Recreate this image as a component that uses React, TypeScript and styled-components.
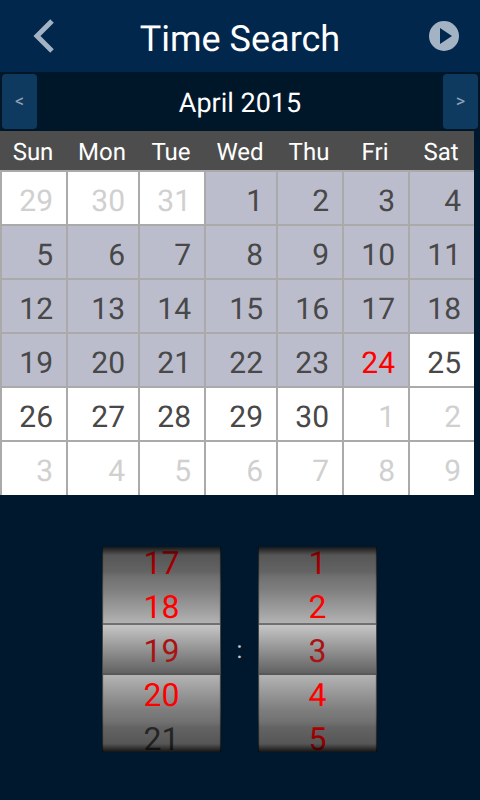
import React from "react";
import styled, { createGlobalStyle } from "styled-components";

const GlobalStyle = createGlobalStyle`
	html, body {
		margin: 0;
		padding: 0;
		background-color: #00182e;
	}
	* {
		box-sizing: border-box;
	}
`;

type DayKind = "muted" | "plain" | "marked" | "today";

const columns = [66, 72, 66, 72, 66, 66, 66];
const weekDays = ["Sun", "Mon", "Tue", "Wed", "Thu", "Fri", "Sat"];

const cell = (day: number, kind: DayKind) => ({ day, kind });

const days = [
	cell(29, "muted"),
	cell(30, "muted"),
	cell(31, "muted"),
	...[1, 2, 3, 4, 5, 6, 7, 8, 9, 10, 11, 12, 13, 14, 15, 16, 17, 18, 19, 20, 21, 22, 23].map((d) =>
		cell(d, "marked"),
	),
	cell(24, "today"),
	...[25, 26, 27, 28, 29, 30].map((d) => cell(d, "plain")),
	...[1, 2, 3, 4, 5, 6, 7, 8, 9].map((d) => cell(d, "muted")),
];

const wheels = [
	[
		{ value: "17", tone: "#ff0000" },
		{ value: "18", tone: "#ff0000" },
		{ value: "19", tone: "#a81414" },
		{ value: "20", tone: "#ff0000" },
		{ value: "21", tone: "#3a3a3a" },
	],
	[
		{ value: "1", tone: "#ff0000" },
		{ value: "2", tone: "#ff0000" },
		{ value: "3", tone: "#a81414" },
		{ value: "4", tone: "#ff0000" },
		{ value: "5", tone: "#ff0000" },
	],
];

const App: React.FC = () => {
	return (
		<Page>
			<GlobalStyle />
			<TopBar>
				<IconSlot>
					<svg width="22" height="36" viewBox="0 0 22 36">
						<path d="M20 3 L5 18 L20 33" fill="none" stroke="#a3b3c4" strokeWidth="5" />
					</svg>
				</IconSlot>
				<Title>Time Search</Title>
				<IconSlot>
					<svg width="30" height="30" viewBox="0 0 30 30">
						<circle cx="15" cy="15" r="15" fill="#a3b3c4" />
						<path d="M11 7 L23 15 L11 23 Z" fill="#01274c" />
					</svg>
				</IconSlot>
			</TopBar>
			<MonthBar>
				<MonthButton>&lt;</MonthButton>
				<MonthName>April 2015</MonthName>
				<MonthButton>&gt;</MonthButton>
			</MonthBar>
			<Calendar>
				<WeekRow>
					{weekDays.map((name) => (
						<WeekDay key={name}>{name}</WeekDay>
					))}
				</WeekRow>
				<DayGrid>
					{days.map((item, i) => (
						<Day key={i} $kind={item.kind}>
							{item.day}
						</Day>
					))}
				</DayGrid>
			</Calendar>
			<Picker>
				{wheels.map((wheel, i) => (
					<React.Fragment key={i}>
						{i > 0 && <Colon>:</Colon>}
						<Wheel>
							<WheelBand />
							{wheel.map((item) => (
								<WheelItem key={item.value} $tone={item.tone}>
									{item.value}
								</WheelItem>
							))}
							<WheelShade />
						</Wheel>
					</React.Fragment>
				))}
			</Picker>
		</Page>
	);
};

export default App;

const Page = styled.div`
	width: 480px;
	height: 800px;
	overflow: hidden;
	background-color: #00182e;
	font-family: Roboto, "Liberation Sans", sans-serif;
	text-rendering: geometricPrecision;
`;

const TopBar = styled.div`
	height: 72px;
	padding: 0 21px;
	display: flex;
	align-items: center;
	justify-content: space-between;
	background-color: #01274c;
`;

const IconSlot = styled.div`
	width: 33px;
	display: flex;
	align-items: center;
	justify-content: flex-end;
`;

const Title = styled.div`
	color: #ffffff;
	font-size: 36px;
	line-height: 78px;
	height: 72px;
`;

const MonthBar = styled.div`
	height: 59px;
	padding: 2px;
	display: flex;
	align-items: stretch;
	justify-content: space-between;
	background-color: #001729;
`;

const MonthButton = styled.div`
	width: 35px;
	border-radius: 4px;
	display: flex;
	align-items: center;
	justify-content: center;
	background-color: #0f3a60;
	color: #8fa3b8;
	font-size: 18px;
`;

const MonthName = styled.div`
	flex: 1;
	text-align: center;
	color: #ffffff;
	font-size: 27px;
	line-height: 59px;
`;

const Calendar = styled.div`
	width: 474px;
`;

const WeekRow = styled.div`
	height: 39px;
	display: grid;
	grid-template-columns: ${columns.map((c) => `${c}px`).join(" ")};
	background-color: #4d4d4d;
`;

const WeekDay = styled.div`
	text-align: center;
	color: #ffffff;
	font-size: 24px;
	line-height: 43px;
`;

const DayGrid = styled.div`
	display: grid;
	grid-template-columns: ${columns.map((c) => `${c}px`).join(" ")};
	grid-template-rows: repeat(5, 54px) 55px;
	background-color: #aaaaaa;
`;

const dayColors: Record<DayKind, string> = {
	muted: "#d0d0d0",
	plain: "#484848",
	marked: "#484848",
	today: "#ff0000",
};

const Day = styled.div<{ $kind: DayKind }>`
	margin: 2px 0 0 2px;
	padding-right: 13px;
	text-align: right;
	font-size: 30px;
	line-height: 60px;
	color: ${(p) => dayColors[p.$kind]};
	background-color: ${(p) => (p.$kind === "marked" || p.$kind === "today" ? "#bbbdcd" : "#ffffff")};
`;

const Picker = styled.div`
	margin-top: 52px;
	padding-right: 1px;
	display: flex;
	justify-content: center;
`;

const Wheel = styled.div`
	position: relative;
	width: 119px;
	height: 205px;
	overflow: hidden;
	display: flex;
	flex-direction: column;
	align-items: center;
	justify-content: center;
	background: linear-gradient(
		to bottom,
		#a0a0a0 0%,
		#929292 14%,
		#7c7c7c 20%,
		#b2b2b2 37%,
		#b2b2b2 63%,
		#7c7c7c 80%,
		#929292 86%,
		#a0a0a0 100%
	);
	box-shadow: inset 2px 0 1px -1px #3a3a3a, inset -2px 0 1px -1px #3a3a3a;
`;

const WheelItem = styled.div<{ $tone: string }>`
	position: relative;
	flex: none;
	height: 44px;
	line-height: 46px;
	font-size: 32px;
	color: ${(p) => p.$tone};
`;

const WheelShade = styled.div`
	position: absolute;
	inset: 0;
	background: linear-gradient(
		to bottom,
		rgba(0, 0, 0, 0.85) 0%,
		rgba(0, 0, 0, 0.45) 4%,
		rgba(0, 0, 0, 0.33) 12%,
		rgba(0, 0, 0, 0) 20%,
		rgba(0, 0, 0, 0) 80%,
		rgba(0, 0, 0, 0.33) 88%,
		rgba(0, 0, 0, 0.45) 96%,
		rgba(0, 0, 0, 0.88) 100%
	);
`;

const WheelBand = styled.div`
	position: absolute;
	left: 1px;
	right: 1px;
	top: 76px;
	height: 52px;
	border-top: 2px solid #707070;
	border-bottom: 2px solid #585858;
	background: linear-gradient(to bottom, #c6c6c6, #626262);
`;

const Colon = styled.div`
	width: 37px;
	align-self: center;
	text-align: center;
	color: #c8c8c8;
	font-size: 24px;
`;
